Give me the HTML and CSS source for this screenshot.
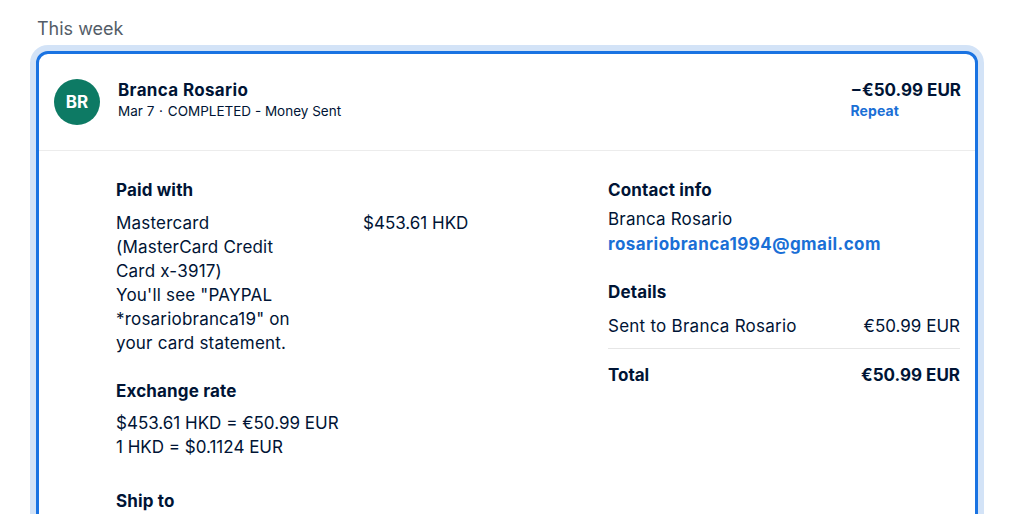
FILE: index.html
```html
<!DOCTYPE html>
<html lang="en">
<head>
<meta charset="utf-8">
<title>Activity</title>
<link rel="stylesheet" href="styles.css">
</head>
<body>
<div class="page">
  <div class="week">This week</div>
  <div class="card">
    <div class="head">
      <div class="avatar">BR</div>
      <div class="who">
        <div class="name">Branca Rosario</div>
        <div class="sub">Mar 7 <span class="dot">·</span> COMPLETED - Money Sent</div>
      </div>
      <div class="amt">
        <div class="total-amt">−€50.99 EUR</div>
        <a class="repeat" href="#">Repeat</a>
      </div>
    </div>
    <div class="body">
      <div class="col-left">
        <div class="section">
          <div class="h">Paid with</div>
          <div class="paid">
            <div class="paid-text">Mastercard<br>(MasterCard Credit Card x-3917)<br>You'll see "PAYPAL *rosariobranca19" on your card statement.</div>
            <div class="paid-amt">$453.61 HKD</div>
          </div>
        </div>
        <div class="section ex">
          <div class="h">Exchange rate</div>
          <div class="txt">$453.61 HKD = €50.99 EUR<br>1 HKD = $0.1124 EUR</div>
        </div>
        <div class="section ship">
          <div class="h">Ship to</div>
        </div>
      </div>
      <div class="col-right">
        <div class="section">
          <div class="h">Contact info</div>
          <div class="txt contact">Branca Rosario<br><a class="email" href="#">rosariobranca1994@gmail.com</a></div>
        </div>
        <div class="section det">
          <div class="h">Details</div>
          <div class="row first"><span>Sent to Branca Rosario</span><span>€50.99 EUR</span></div>
          <div class="row total"><span>Total</span><span>€50.99 EUR</span></div>
        </div>
      </div>
    </div>
  </div>
</div>
</body>
</html>
```
FILE: styles.css
```css
* { box-sizing: border-box; }
html, body { margin: 0; padding: 0; background: #fff; }
body {
  font-family: Inter, "Noto Sans", "Liberation Sans", sans-serif;
  color: #001435;
  overflow: hidden;
  height: 514px;
}
.page { padding: 18px 32px 0 36px; }
.week {
  font-size: 18px;
  line-height: 22px;
  color: #545d68;
  padding-left: 1px;
  margin-bottom: 11px;
}
.card {
  border: 3px solid #1a73e2;
  border-radius: 12px;
  box-shadow: 0 0 0 6px #d3e3f7;
  background: #fff;
  height: 600px;
}
.head {
  display: flex;
  align-items: center;
  height: 97px;
  padding: 0 14px 0 15px;
  border-bottom: 1px solid #ececec;
}
.avatar {
  width: 46px;
  height: 46px;
  border-radius: 50%;
  background: #0d7a64;
  color: #fff;
  font-weight: 700;
  font-size: 17px;
  display: flex;
  align-items: center;
  justify-content: center;
  flex: none;
}
.who { margin-left: 18px; flex: 1; padding-bottom: 5px; }
.name { font-size: 17px; font-weight: 700; line-height: 22px; letter-spacing: 0.35px; }
.sub { font-size: 13.5px; line-height: 20px; margin-top: 0; }
.dot { margin: 0 1px; }
.amt { padding-bottom: 4px; }
.total-amt { font-size: 17px; font-weight: 700; line-height: 22px; }
.repeat {
  display: block;
  font-size: 14px;
  font-weight: 700;
  color: #1a6fd6;
  text-decoration: none;
  line-height: 20px;
  letter-spacing: 0.1px;
}
.body {
  display: grid;
  grid-template-columns: 492px 1fr;
  padding: 27px 15px 0 77px;
}
.h { font-size: 17px; font-weight: 700; line-height: 24px; letter-spacing: 0.15px; }
.txt, .paid { font-size: 17px; line-height: 24px; letter-spacing: 0.2px; }
.paid { display: grid; grid-template-columns: 247px auto; margin-top: 9px; }
.paid-text { width: 190px; }
.paid-amt { letter-spacing: 0; }
.section.ex { margin-top: 24px; }
.section.ex .txt { margin-top: 8px; letter-spacing: 0; }
.section.ship { margin-top: 30px; }
.contact { margin-top: 5px; line-height: 25px; }
.email { color: #1a6fd6; font-weight: 700; text-decoration: none; letter-spacing: 0.45px; }
.section.det { margin-top: 23px; }
.row {
  display: flex;
  justify-content: space-between;
  font-size: 17px;
  line-height: 24px;
}
.row.first { margin-top: 10px; padding-bottom: 10px; border-bottom: 1px solid #e6e6e6; }
.row.first span:first-child { letter-spacing: 0.25px; }
.row.total { font-weight: 700; margin-top: 14px; }
```
